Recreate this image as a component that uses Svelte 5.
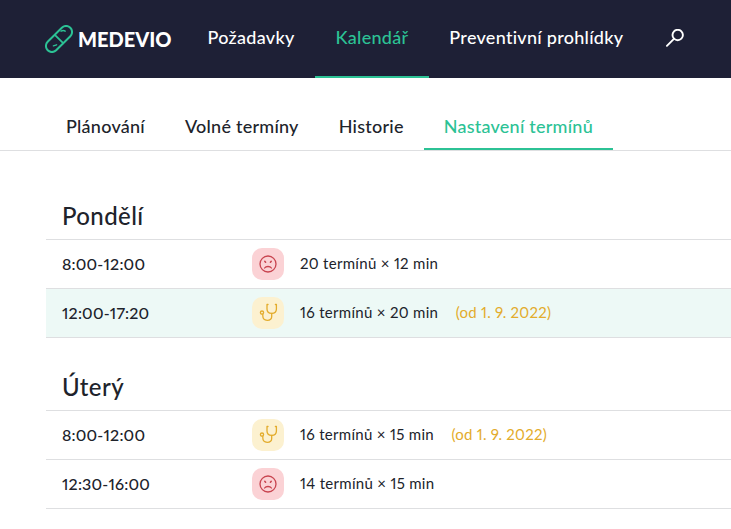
<script>
  const nav = [
    { label: 'Požadavky' },
    { label: 'Kalendář', active: true },
    { label: 'Preventivní prohlídky' }
  ];
  const tabs = [
    { label: 'Plánování' },
    { label: 'Volné termíny' },
    { label: 'Historie' },
    { label: 'Nastavení termínů', active: true }
  ];
  const days = [
    {
      name: 'Pondělí',
      rows: [
        { time: '8:00-12:00', icon: 'sad', text: '20 termínů × 12 min' },
        { time: '12:00-17:20', icon: 'steth', text: '16 termínů × 20 min', note: '(od 1. 9. 2022)', hl: true }
      ]
    },
    {
      name: 'Úterý',
      rows: [
        { time: '8:00-12:00', icon: 'steth', text: '16 termínů × 15 min', note: '(od 1. 9. 2022)' },
        { time: '12:30-16:00', icon: 'sad', text: '14 termínů × 15 min' }
      ]
    }
  ];
</script>

<header class="top">
  <div class="logo">
    <svg width="28" height="28" viewBox="0 0 28 28" fill="none" stroke="#2cc295" stroke-width="2" stroke-linecap="round" stroke-linejoin="round">
      <rect x="-6" y="-16" width="12" height="32" rx="6" transform="translate(14 14) rotate(45)" />
      <path d="M10.3 10.3 L18.2 18.2" stroke-width="1.8" />
      <path d="M16 6.2 C17.4 5.4 19 5.4 20.2 6.2" stroke-width="1.4" />
      <path d="M8.4 20.8 L11.6 19.8" stroke-width="1.4" />
    </svg>
    <span>MEDEVIO</span>
  </div>
  <nav class="mainnav">
    {#each nav as item}
      <span class="navitem" class:active={item.active}>{item.label}</span>
    {/each}
  </nav>
  <svg class="search" width="20" height="20" viewBox="0 0 20 20" fill="none" stroke="#fff" stroke-width="1.9" stroke-linecap="round">
    <circle cx="13.7" cy="6" r="5.2" />
    <path d="M9.9 9.8 L2.9 16.8" />
  </svg>
</header>

<div class="tabs">
  {#each tabs as tab}
    <span class="tab" class:active={tab.active}>{tab.label}</span>
  {/each}
</div>

<main class="content">
  {#each days as day}
    <h2>{day.name}</h2>
    <div class="rows">
      {#each day.rows as row}
        <div class="row" class:hl={row.hl}>
          <span class="time">{row.time}</span>
          <span class="badge {row.icon}">
            {#if row.icon === 'sad'}
              <svg width="20" height="20" viewBox="0 0 20 20" fill="none" stroke="#c8444f" stroke-width="1.3" stroke-linecap="round">
                <circle cx="10" cy="10" r="8" />
                <path d="M6.6 14 C8 12 12 12 13.4 14" />
                <path d="M6.8 7.4 L7.6 8.2 M13.2 7.4 L12.4 8.2" stroke-width="1.5" />
              </svg>
            {:else}
              <svg width="20" height="20" viewBox="0 0 20 20" fill="none" stroke="#e3ac2c" stroke-width="1.3" stroke-linecap="round" stroke-linejoin="round">
                <path d="M10 1.5 H9 V6 C9 8.6 11 10.3 13.7 10.3 C16.4 10.3 18.4 8.6 18.4 6 V1.5 H17.4" />
                <path d="M13.7 10.3 V13.5 C13.7 15.8 11.8 17.3 9.2 17.3 C6.6 17.3 4.8 15.6 4.8 12.8 V11.3" />
                <circle cx="4" cy="9.6" r="1.6" />
              </svg>
            {/if}
          </span>
          <span class="text">{row.text}</span>
          {#if row.note}<span class="note">{row.note}</span>{/if}
        </div>
      {/each}
    </div>
  {/each}
</main>

<style>
  :global(body) {
    margin: 0;
    background: #fff;
    font-family: Lato, "Open Sans", sans-serif;
    font-variant-numeric: proportional-nums;
    color: #20232b;
    overflow: hidden;
  }
  .top {
    height: 78px;
    background: #1e2036;
    display: flex;
    align-items: center;
    padding-left: 45px;
    box-sizing: border-box;
  }
  .logo {
    display: flex;
    align-items: center;
    gap: 5px;
    width: 142px;
    color: #fff;
    font-weight: 900;
    font-size: 20px;
  }
  .mainnav {
    display: flex;
    align-self: stretch;
  }
  .navitem {
    display: flex;
    align-items: center;
    padding: 0 20.5px 2px;
    color: #fff;
    font-size: 18px;
    font-weight: 500;
    letter-spacing: 0.28px;
    border-bottom: 2px solid transparent;
    box-sizing: border-box;
  }
  .navitem.active {
    color: #2cc295;
    border-bottom-color: #2cc295;
  }
  .search {
    margin-left: 20px;
  }
  .tabs {
    display: flex;
    height: 73px;
    box-sizing: border-box;
    border-bottom: 1px solid #dedfe1;
    align-items: flex-end;
    padding-left: 46px;
  }
  .tab {
    padding: 0 20px 11px 20px;
    font-size: 18px;
    font-weight: 500;
    letter-spacing: 0.24px;
    line-height: 21px;
    border-bottom: 2px solid transparent;
  }
  .tab.active {
    color: #2cc295;
    border-bottom-color: #2cc295;
  }
  .content {
    padding-left: 46px;
  }
  h2 {
    margin: 0;
    padding-left: 16px;
    font-size: 24px;
    font-weight: 500;
    line-height: 28px;
    letter-spacing: 0.4px;
  }
  h2:first-child {
    margin-top: 51px;
    margin-bottom: 9px;
  }
  .rows + h2 {
    margin-top: 35px;
    margin-bottom: 9px;
  }
  .rows {
    border-top: 1px solid #dedfe1;
  }
  .row {
    height: 49px;
    box-sizing: border-box;
    border-bottom: 1px solid #dedfe1;
    display: flex;
    align-items: center;
    padding-left: 16px;
  }
  .row.hl {
    background: #edf9f6;
  }
  .time {
    width: 190px;
    font-size: 16px;
    font-weight: 500;
    letter-spacing: 0.2px;
    margin-bottom: 1px;
  }
  .badge {
    width: 32px;
    height: 32px;
    border-radius: 10px;
    display: flex;
    align-items: center;
    justify-content: center;
    margin-right: 16px;
  }
  .badge.sad { background: #fbd2d5; }
  .badge.steth { background: #fcf1d0; }
  .text {
    font-size: 15px;
    letter-spacing: 0.3px;
    margin-bottom: 2px;
  }
  .note {
    margin-left: 17.5px;
    margin-bottom: 2px;
    font-size: 15px;
    color: #e3ac2c;
    letter-spacing: 0.25px;
  }
</style>
